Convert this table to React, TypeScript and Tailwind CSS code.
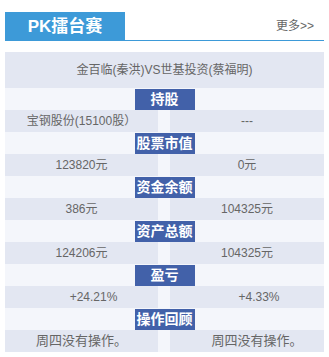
import React from "react";

const FONT = { fontFamily: '"Liberation Sans", "Noto Sans CJK SC", sans-serif' };

type Row = { label: string; left: string; right: string; lp?: string; rp?: string; big?: boolean };

const rows: Row[] = [
  { label: "持股", left: "宝钢股份(15100股）", right: "---" },
  { label: "股票市值", left: "123820元", right: "0元" },
  { label: "资金余额", left: "386元", right: "104325元" },
  { label: "资产总额", left: "124206元", right: "104325元" },
  { label: "盈亏", left: "+24.21%", right: "+4.33%", lp: "pl-[24px]", rp: "pl-[24px]" },
  { label: "操作回顾", left: "周四没有操作。", right: "周四没有操作。", rp: "pl-[20px]", big: true },
];

export default function App() {
  return (
    <div className="w-[329px] h-[357px] bg-white" style={FONT}>
      <div className="pt-[12px] px-[5px]">
        <div className="flex items-end justify-between border-b border-[#3d9ad8] h-[29px]">
          <div className="w-[120px] h-[28px] bg-[#3d9ad8] flex items-center justify-center text-white font-bold text-[17px] leading-none">
            PK擂台赛
          </div>
          <div className="text-[12px] text-[#666] h-[28px] flex items-center pr-[10px] leading-none">
            更多&gt;&gt;
          </div>
        </div>
        <div className="mt-[11px] bg-[#f4f6fb]">
          <div className="h-[36px] bg-[#e3e7f2] flex items-center justify-center text-[12px] text-[#666]">
            金百临(秦洪)VS世基投资(蔡福明)
          </div>
          {rows.map((r) => (
            <React.Fragment key={r.label}>
              <div className="h-[22px] flex items-center justify-center">
                <div className="w-[60px] h-[21px] bg-[#4261a9] text-white font-bold text-[14px] flex items-center justify-center leading-none">
                  {r.label}
                </div>
              </div>
              <div className={`h-[22px] flex ${r.big ? "text-[13px]" : "text-[12px]"} text-[#666]`}>
                <div className={`w-[153px] bg-[#e3e7f2] flex items-center justify-center ${r.lp ?? ""}`}>
                  {r.left}
                </div>
                <div className="w-[12px]" />
                <div className={`flex-1 bg-[#e3e7f2] flex items-center justify-center ${r.rp ?? ""}`}>
                  {r.right}
                </div>
              </div>
            </React.Fragment>
          ))}
        </div>
      </div>
    </div>
  );
}
